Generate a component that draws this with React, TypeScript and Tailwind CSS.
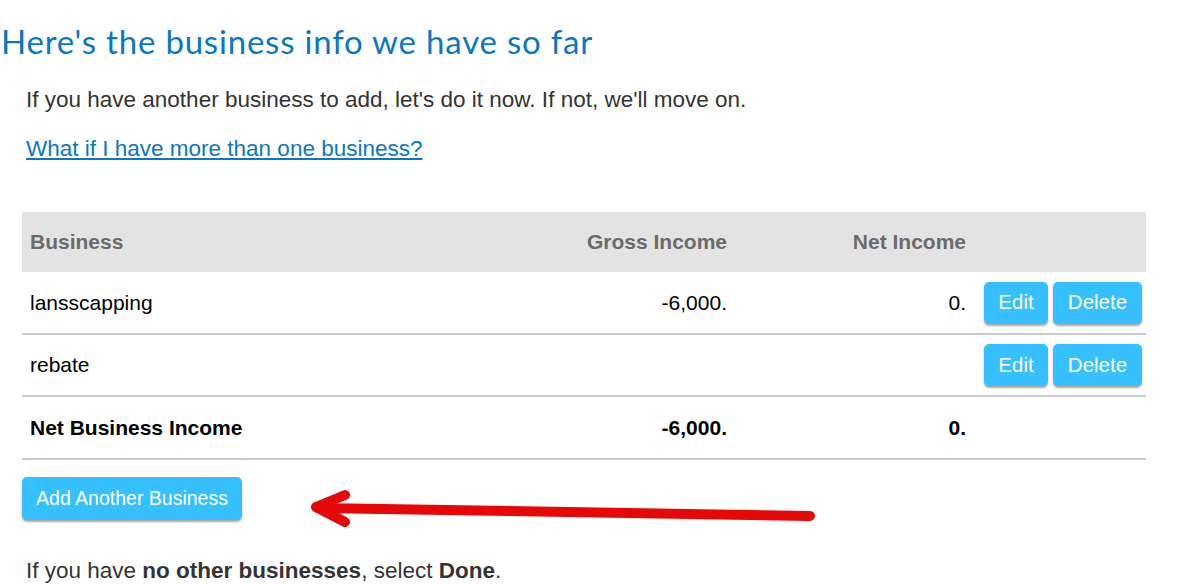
import React from 'react'

const rows = [
  { name: 'lansscapping', gross: '-6,000.', net: '0.' },
  { name: 'rebate', gross: '', net: '' },
]

const Btn = ({ label, w }: { label: string; w: string }) => (
  <button
    className={`${w} h-[42px] rounded-[5px] bg-[#36c0ff] text-white text-[20.5px] shadow-[0_2px_2px_rgba(0,0,0,0.35)]`}
  >
    {label}
  </button>
)

const App = () => {
  return (
    <div className="relative w-[1195px] h-[584px] overflow-hidden bg-white font-['Liberation_Sans',Arial,sans-serif] text-[#333]">
      <h1 className="pl-[1px] pt-[21px] h-[40px] box-content text-[33px] tracking-[0.8px] leading-[40px] text-[#0a77c5] font-['Lato',sans-serif]">
        Here's the business info we have so far
      </h1>

      <div className="pl-[26px] pt-[26px]">
        <p className="text-[22.5px] leading-[26px]">
          If you have another business to add, let's do it now. If not, we'll move on.
        </p>
        <a href="#" className="block mt-[23px] text-[22.5px] leading-[26px] text-[#0a77c5] underline">
          What if I have more than one business?
        </a>
      </div>

      <table className="ml-[22px] mt-[50px] w-[1124px] table-fixed border-collapse text-[21px] text-black">
        <thead>
          <tr className="bg-[#e3e3e3] h-[60px] text-[#6b6b6b] font-bold">
            <th className="w-[470px] pl-[8px] text-left">Business</th>
            <th className="w-[243px] pr-[8px] text-right">Gross Income</th>
            <th className="w-[239px] pr-[8px] text-right">Net Income</th>
            <th className="w-[172px]"></th>
          </tr>
        </thead>
        <tbody>
          {rows.map((r) => (
            <tr key={r.name} className="h-[62px] border-b-2 border-[#cccccc]">
              <td className="pl-[8px]">{r.name}</td>
              <td className="pr-[8px] text-right">{r.gross}</td>
              <td className="pr-[8px] text-right">{r.net}</td>
              <td className="pr-[4px]">
                <div className="flex justify-end gap-[5px]">
                  <Btn label="Edit" w="w-[64px]" />
                  <Btn label="Delete" w="w-[89px]" />
                </div>
              </td>
            </tr>
          ))}
          <tr className="h-[63px] border-b-2 border-[#cccccc] font-bold">
            <td className="pl-[8px]">Net Business Income</td>
            <td className="pr-[8px] text-right">-6,000.</td>
            <td className="pr-[8px] text-right">0.</td>
            <td></td>
          </tr>
        </tbody>
      </table>

      <div className="pl-[22px] pt-[17px]">
        <button className="w-[220px] h-[43px] rounded-[5px] bg-[#36c0ff] text-white text-[19.5px] shadow-[0_2px_2px_rgba(0,0,0,0.35)]">
          Add Another Business
        </button>
      </div>

      <p className="pl-[26px] pt-[38px] text-[22.5px] leading-[26px]">
        If you have <b>no other businesses</b>, select <b>Done</b>.
      </p>

      <svg className="absolute left-0 top-0 pointer-events-none" width="1195" height="584">
        <g stroke="#e60808" strokeWidth="10" strokeLinecap="round" strokeLinejoin="round" fill="none">
          <line x1="318" y1="508" x2="810" y2="516" />
          <polyline points="345,495 316,507 345,522" />
        </g>
      </svg>
    </div>
  )
}

export default App
